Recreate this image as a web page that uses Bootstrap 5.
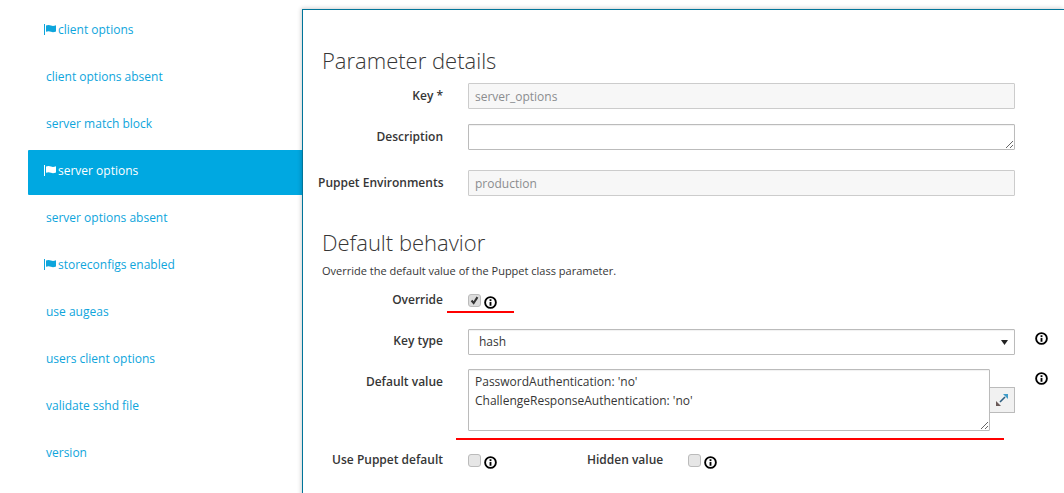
<!DOCTYPE html>
<html lang="en">
<head>
    <meta charset="UTF-8">
    <meta name="viewport" content="width=device-width, initial-scale=1.0">
    <title>Parameter details</title>
    <link href="https://cdn.jsdelivr.net/npm/bootstrap@5.3.0/dist/css/bootstrap.min.css" rel="stylesheet">
    <style>
        html, body { height: 100%; overflow: hidden; }
        body { font-family: "Open Sans", "Liberation Sans", sans-serif; font-size: 12px; line-height: 20px; color: #363636; background: #fff; }
        .page-wrap { padding: 9px 0 0 28px; height: 100%; }

        /* left list */
        .param-nav { width: 274px; flex: none; }
        .param-nav a { display: block; height: 45px; margin-bottom: 2px; padding: 11px 0 0 18px; color: #0ea5dc; text-decoration: none; white-space: nowrap; border-radius: 1px 0 0 1px; }
        .param-nav a.flagged { padding-left: 16px; }
        .param-nav a.active { background: #00a8e1; color: #fff; }
        .flag-icon { width: 12px; height: 11px; margin-right: 2px; vertical-align: -1px; fill: currentColor; }

        /* right panel */
        .param-panel { flex: 1; min-width: 0; height: 500px; border-top: 1px solid #00759a; border-left: 1px solid #00759a; box-shadow: -1px -1px 4px rgba(0,0,0,.18); padding: 38px 0 0 15px; }
        .param-panel h3 { font-family: inherit; font-size: 22px; font-weight: 300; line-height: 24px; margin: 0 0 11px 4px; color: #363636; }
        .param-panel h3.second { margin-top: 34px; margin-bottom: 9px; }
        .help-text { font-size: 11px; line-height: 16px; margin: 0 0 9px 4px; }

        .field-row { display: flex; align-items: flex-start; margin-bottom: 20px; }
        .field-row.tight { margin-bottom: 15px; }
        .field-row.override-row { margin-bottom: 19px; }
        .field-row.type-row { margin-bottom: 14px; }
        .field-row.value-row { margin-bottom: 17px; }
        .field-label { width: 125px; flex: none; text-align: right; font-weight: 600; margin: 0; padding-top: 3px; white-space: nowrap; }
        .override-row .field-label, .type-row .field-label, .puppet-row .field-label { padding-top: 2px; }
        .field-body { width: 547px; flex: none; margin-left: 25px; }
        .param-panel .form-control, .param-panel .form-select { font-size: 12px; line-height: 20px; height: 26px; min-height: 0; padding: 2px 6px; border: 1px solid #bbb; border-radius: 1px; color: #363636; box-shadow: inset 0 1px 1px rgba(3,3,3,.06); }
        .param-panel .form-control:disabled { background: #f7f7f7; color: #8b8d8f; border-color: #ccc; box-shadow: none; }
        .param-panel .form-select { padding-left: 10px; background-size: 7px 5px; background-position: right 6px center; background-image: url("data:image/svg+xml,%3Csvg xmlns='http://www.w3.org/2000/svg' viewBox='0 0 7 5'%3E%3Cpath d='M0 0h7L3.500 5z' fill='%23222'/%3E%3C/svg%3E"); }
        .param-panel textarea.form-control { height: 62px; line-height: 19px; padding: 2px 6px; width: 522px; }
        .param-panel textarea.desc-box { height: 26px; }

        .info-icon { width: 13px; height: 13px; flex: none; }
        .side-info { margin-left: 20px; margin-top: 3px; }
        .check-box { width: 13px; height: 13px; margin: 6px 0 0; border: 1px solid #bbb; border-radius: 3px; background-color: #e6e6e6; flex: none; }
        .check-box:checked { background-color: #dcdcdc; border-color: #bbb; background-image: url("data:image/svg+xml,%3Csvg xmlns='http://www.w3.org/2000/svg' viewBox='0 0 13 13'%3E%3Cpath d='M3 6.500l2.500 3L10 2.500' fill='none' stroke='%23333' stroke-width='2.400'/%3E%3C/svg%3E"); }
        .check-box:focus { box-shadow: none; border-color: #bbb; }
        .check-wrap { display: flex; gap: 3px; align-items: flex-start; }
        .check-wrap .info-icon { margin-top: 8px; }
        .puppet-check { margin-left: 25px; }
        .expand-btn { width: 25px; height: 26px; margin-top: 18px; padding: 0; border: 1px solid #bbb; border-left: 0; border-radius: 0 1px 1px 0; background: #f1f1f1; display: flex; align-items: center; justify-content: center; }
        .hidden-label { margin-left: 90px; font-weight: 600; padding-top: 2px; width: 76px; white-space: nowrap; }
        .hidden-check { margin-left: 25px; }

        /* red marks drawn over the form */
        .red-mark { position: absolute; height: 2px; background: #f00; }
        .mark-override { left: 447px; top: 311px; width: 67px; }
        .mark-default { left: 456px; top: 438px; width: 548px; }
    </style>
</head>
<body>
    <svg width="0" height="0" class="position-absolute">
        <symbol id="flag" viewBox="0 0 12 11"><path d="M0 0h1v11H0zM2 1.500c2-1 3.500-.6 5 0s3 .5 5-.3v6.300c-2 .8-3.500 .9-5 .3s-3-.9-5 0z"/></symbol>
        <symbol id="info" viewBox="0 0 14 14"><circle cx="7" cy="7" r="5.800" fill="#fff" stroke="#000" stroke-width="2"/><rect x="6" y="3.500" width="2" height="2" fill="#000"/><rect x="6" y="6.500" width="2" height="4" fill="#000"/></symbol>
    </svg>

    <div class="page-wrap d-flex">
        <!-- parameter list -->
        <nav class="param-nav">
            <a href="#" class="flagged"><svg class="flag-icon"><use href="#flag"/></svg>client options</a>
            <a href="#">client options absent</a>
            <a href="#">server match block</a>
            <a href="#" class="flagged active"><svg class="flag-icon"><use href="#flag"/></svg>server options</a>
            <a href="#">server options absent</a>
            <a href="#" class="flagged"><svg class="flag-icon"><use href="#flag"/></svg>storeconfigs enabled</a>
            <a href="#">use augeas</a>
            <a href="#">users client options</a>
            <a href="#">validate sshd file</a>
            <a href="#">version</a>
        </nav>

        <!-- details -->
        <div class="param-panel">
            <h3>Parameter details</h3>
            <div class="field-row tight">
                <label class="field-label">Key *</label>
                <div class="field-body"><input class="form-control" type="text" value="server_options" disabled></div>
            </div>
            <div class="field-row">
                <label class="field-label">Description</label>
                <div class="field-body"><textarea class="form-control desc-box w-100"></textarea></div>
            </div>
            <div class="field-row mb-0">
                <label class="field-label">Puppet Environments</label>
                <div class="field-body"><input class="form-control" type="text" value="production" disabled></div>
            </div>

            <h3 class="second">Default behavior</h3>
            <p class="help-text">Override the default value of the Puppet class parameter.</p>

            <div class="field-row override-row">
                <label class="field-label">Override</label>
                <div class="field-body check-wrap">
                    <input class="form-check-input check-box" type="checkbox" checked>
                    <svg class="info-icon"><use href="#info"/></svg>
                </div>
            </div>
            <div class="field-row type-row">
                <label class="field-label">Key type</label>
                <div class="field-body">
                    <select class="form-select"><option>hash</option></select>
                </div>
                <svg class="info-icon side-info"><use href="#info"/></svg>
            </div>
            <div class="field-row value-row">
                <label class="field-label">Default value</label>
                <div class="field-body d-flex">
                    <textarea class="form-control">PasswordAuthentication: 'no'
ChallengeResponseAuthentication: 'no'</textarea>
                    <button class="btn expand-btn" type="button">
                        <svg width="12" height="12" viewBox="0 0 12 12"><path d="M4 8L9 3" stroke="#2f5f80" stroke-width="1.600"/><path d="M7 0h5v5z" fill="#3f9bc8"/><path d="M0 7v5h5z" fill="#6a5a58"/></svg>
                    </button>
                </div>
                <svg class="info-icon side-info"><use href="#info"/></svg>
            </div>
            <div class="field-row puppet-row">
                <label class="field-label">Use Puppet default</label>
                <div class="check-wrap puppet-check">
                    <input class="form-check-input check-box" type="checkbox">
                    <svg class="info-icon"><use href="#info"/></svg>
                </div>
                <label class="hidden-label">Hidden value</label>
                <div class="check-wrap hidden-check">
                    <input class="form-check-input check-box" type="checkbox">
                    <svg class="info-icon"><use href="#info"/></svg>
                </div>
            </div>
        </div>
    </div>

    <div class="red-mark mark-override"></div>
    <div class="red-mark mark-default"></div>

    <script src="https://cdn.jsdelivr.net/npm/bootstrap@5.3.0/dist/js/bootstrap.bundle.min.js"></script>
</body>
</html>
